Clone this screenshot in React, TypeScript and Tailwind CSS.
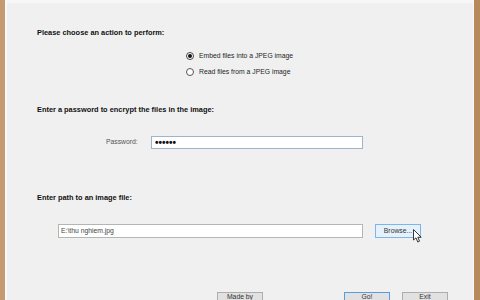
export default function App() {
  const font = { fontFamily: '"Liberation Sans", Arial, sans-serif' };
  return (
    <div className="flex h-[300px] w-[480px] overflow-hidden bg-[#f0f0f0] text-[6.8px] text-[#262626]" style={font}>
      <div className="w-[5px] bg-[#c49b70]" />
      <div className="w-[2px] bg-[#fafafa]" />
      <div className="relative flex flex-1 flex-col border-t-[3px] border-[#f7f7f7]">
        <div className="mt-[25px] h-[10px] pl-[30px] text-[7.4px] font-bold leading-[10px] text-[#111]">
          Please choose an action to perform:
        </div>

        <div className="mt-[13px] flex h-[10px] items-center gap-[5px] pl-[179px] leading-[10px]">
          <span className="flex h-[8px] w-[8px] items-center justify-center rounded-full border border-[#444] bg-white">
            <span className="h-[4px] w-[4px] rounded-full bg-[#111]" />
          </span>
          <span>Embed files into a JPEG image</span>
        </div>
        <div className="mt-[6px] flex h-[10px] items-center gap-[5px] pl-[179px] leading-[10px]">
          <span className="h-[8px] w-[8px] rounded-full border border-[#555] bg-white" />
          <span>Read files from a JPEG image</span>
        </div>

        <div className="mt-[28px] h-[10px] pl-[30px] text-[7.4px] font-bold leading-[10px] text-[#111]">
          Enter a password to encrypt the files in the image:
        </div>

        <div className="mt-[21px] flex h-[13px] items-center pl-[99px]">
          <span className="w-[45px] text-[#555]">Password:</span>
          <div className="flex h-[13px] w-[212px] items-center border border-[#9fb4cc] bg-white pl-[3px] text-[10px] font-bold leading-none text-[#111]">
            ••••••
          </div>
        </div>

        <div className="mt-[44px] h-[10px] pl-[30px] text-[7.4px] font-bold leading-[10px] text-[#111]">
          Enter path to an image file:
        </div>

        <div className="mt-[21px] flex h-[14px] items-center gap-[12px] pl-[51px]">
          <div className="flex h-[14px] w-[305px] items-center border border-[#b5b5b5] bg-white pl-[2px] text-[#444]">
            E:\thu nghiem.jpg
          </div>
          <div className="flex h-[14px] w-[46px] items-center justify-center border border-[#7eb4ea] bg-[#e5f1fb] text-[#333]">
            Browse...
          </div>
        </div>

        <div className="mt-[54px] flex h-[16px] pl-[210px] leading-[8px]">
          <div className="flex h-[16px] w-[46px] items-start justify-center border border-[#adadad] bg-[#e1e1e1] text-[#333]">
            Made by
          </div>
          <div className="ml-[81px] flex h-[16px] w-[46px] items-start justify-center border border-[#5a9be0] bg-[#e1e1e1] text-[#333]">
            Go!
          </div>
          <div className="ml-[12px] flex h-[16px] w-[46px] items-start justify-center border border-[#adadad] bg-[#e1e1e1] text-[#333]">
            Exit
          </div>
        </div>

        <svg className="absolute left-[406px] top-[226px]" width="10" height="15" viewBox="0 0 10 15">
          <path d="M0.5 0.5 L0.5 11 L3 8.8 L4.8 13 L6.5 12.2 L4.8 8.2 L8.2 8.2 Z" fill="#fff" stroke="#222" strokeWidth="0.9" strokeLinejoin="round" />
        </svg>
      </div>
      <div className="w-[1px] bg-[#fafafa]" />
      <div className="w-[6px] bg-[#b8895d]" />
    </div>
  );
}
